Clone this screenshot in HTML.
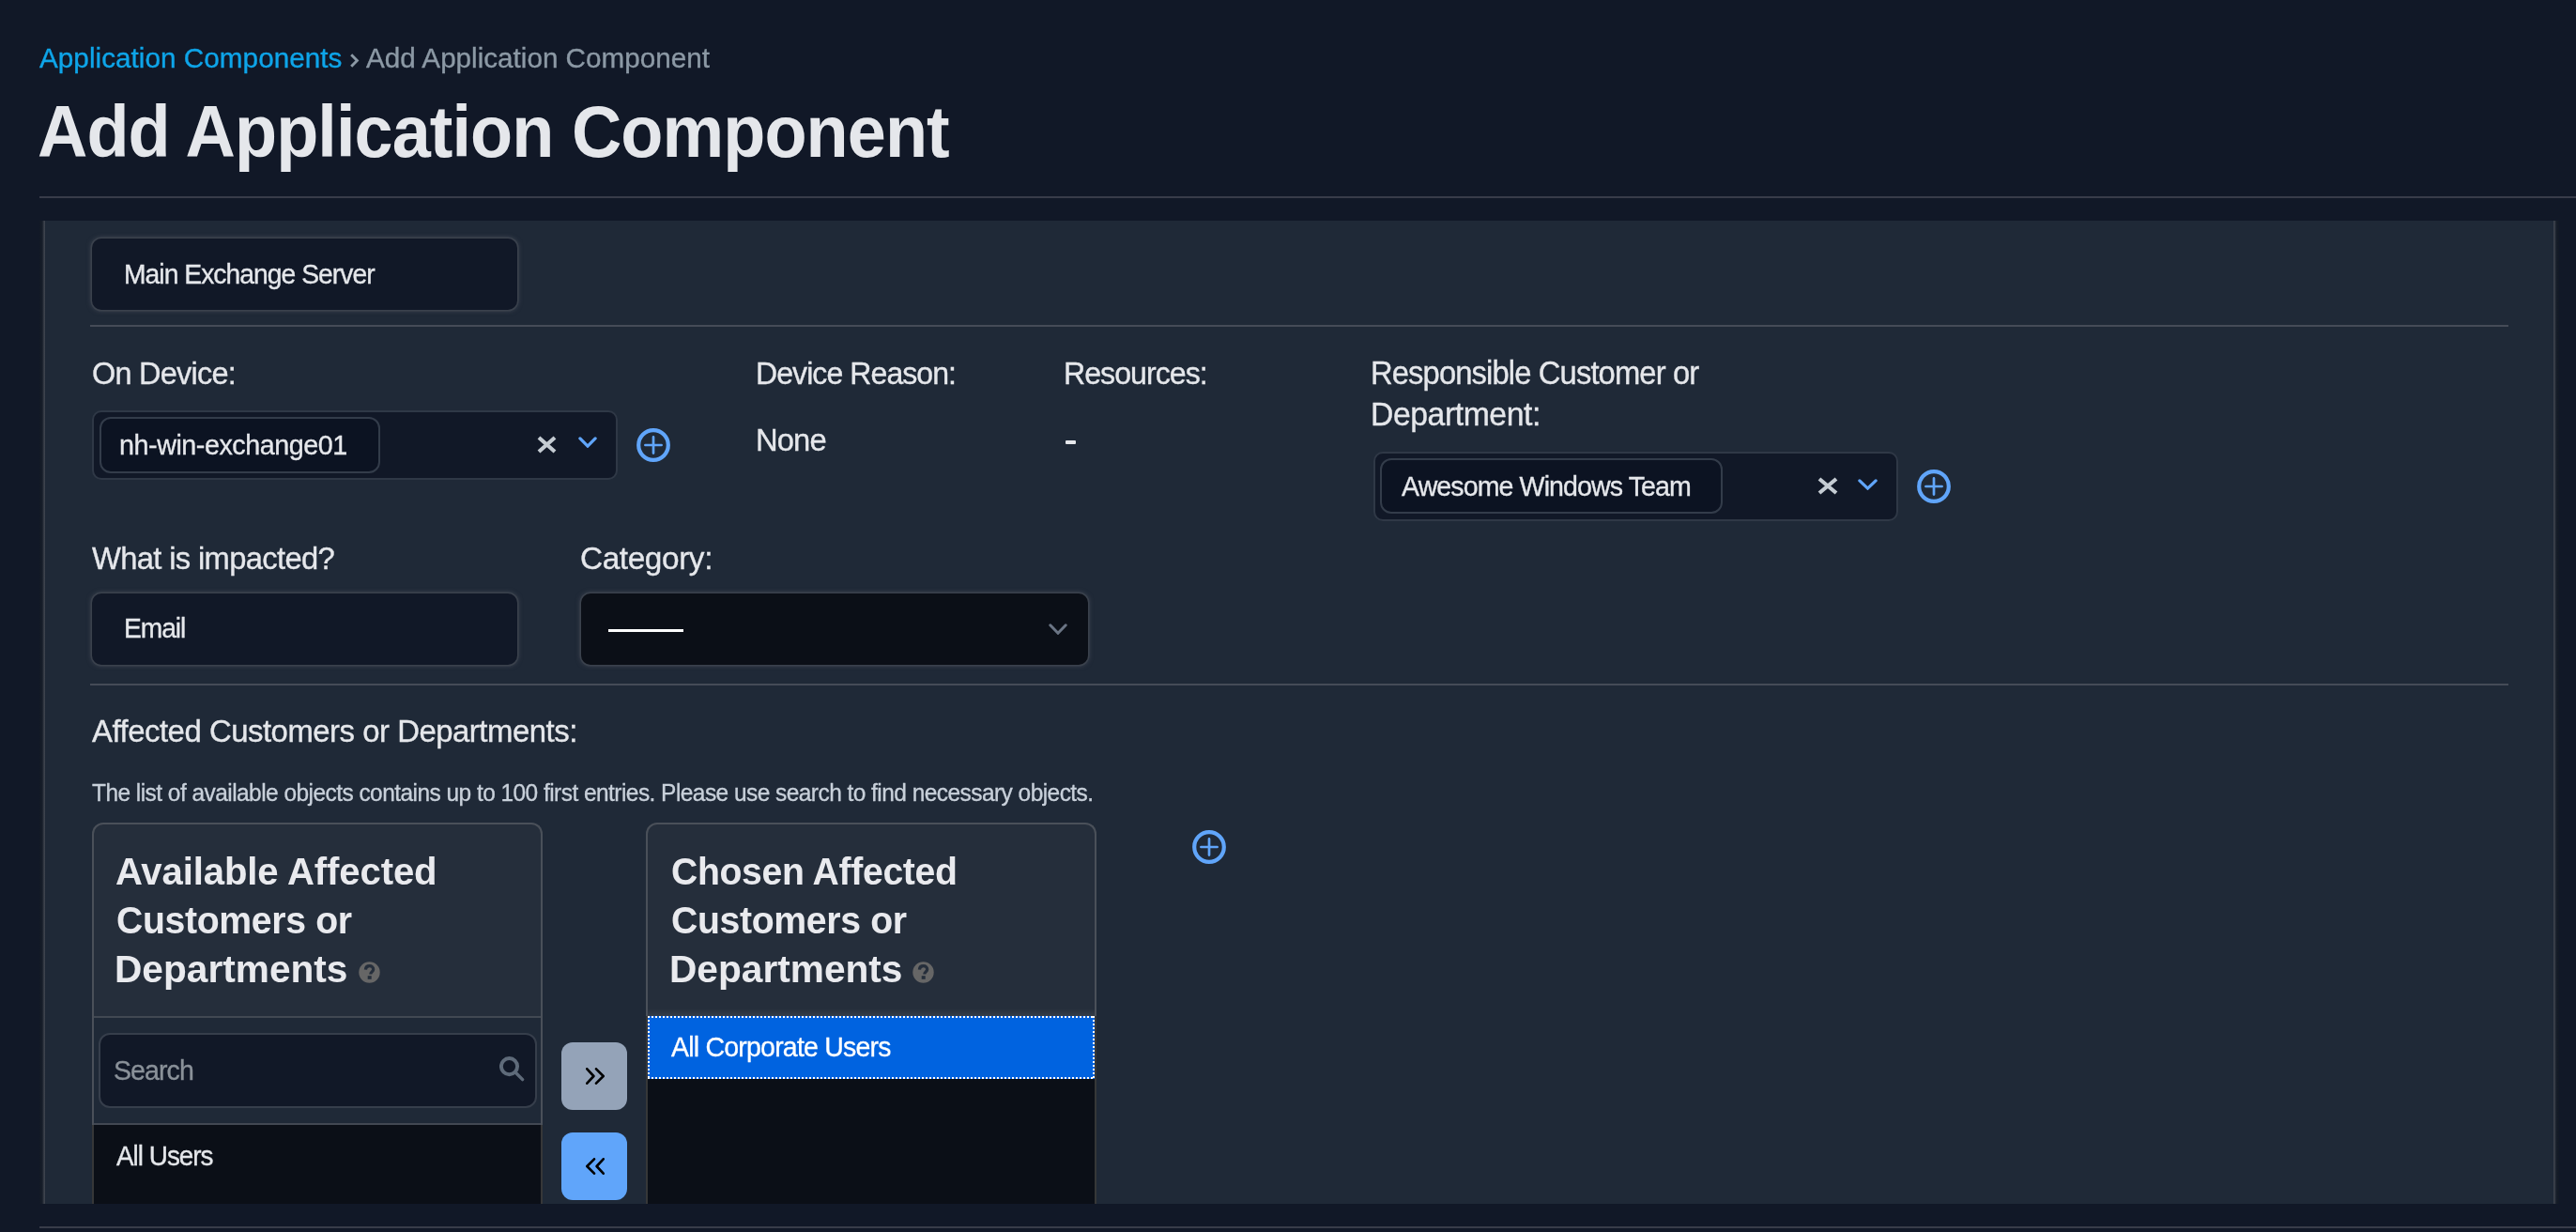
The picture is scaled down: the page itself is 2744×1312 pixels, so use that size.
<!DOCTYPE html>
<html><head><meta charset="utf-8"><title>Add Application Component</title>
<style>
html,body{margin:0;padding:0;width:2744px;height:1312px;overflow:hidden;background:#111827;font-family:"Liberation Sans",sans-serif;}
.a{position:absolute;box-sizing:border-box}
.t{position:absolute;white-space:nowrap;line-height:1;color:#e5e7eb;-webkit-font-smoothing:antialiased;-webkit-text-stroke:0.35px currentColor;transform-origin:0 0}
.b{-webkit-text-stroke:0}
</style></head><body>
<div class="t" style="left:42.0px;top:46.7px;font-size:29.7px;letter-spacing:0.03px;font-weight:400;color:#0ea5e9;transform:scaleX(1.0) translateZ(0);">Application Components</div>
<svg class="a" style="left:372px;top:56px" width="11" height="17" viewBox="0 0 11 17"><path d="M2.2 2.2 L8.4 8.5 L2.2 14.8" fill="none" stroke="#8c99a5" stroke-width="2.9"/></svg>
<div class="t" style="left:389.5px;top:46.7px;font-size:29.7px;letter-spacing:-0.01px;font-weight:400;color:#8c99a5;transform:scaleX(0.9993) translateZ(0);">Add Application Component</div>
<div class="t b" style="left:39.9px;top:102.2px;font-size:77.7px;letter-spacing:-0.97px;font-weight:700;color:#e5e7eb;transform:scaleX(0.9503) translateZ(0);">Add Application Component</div>
<div class="a" style="left:42px;top:209px;width:2702px;height:2px;background:#383c49"></div>
<div class="a" style="left:42px;top:235px;width:2684px;height:1047px;background:linear-gradient(to right,#121925 0px,#161d29 2.5px,#252b36 4px,#3b414b 4.8px,#3d434d 6px,#1f2937 6.2px,#1f2937 calc(100% - 6.2px),#3d434d calc(100% - 6px),#3b414b calc(100% - 4.8px),#252b36 calc(100% - 4px),#161d29 calc(100% - 2.5px),#121925 100%)"></div>
<div class="a" style="left:98px;top:254px;width:453px;height:76px;background:#111827;border-radius:10px;box-shadow:0 0 0 1.5px #3a414c,0 0 4px 2px rgba(62,68,80,.75)"></div>
<div class="t" style="left:131.7px;top:276.6px;font-size:30.1px;letter-spacing:-1.03px;font-weight:400;color:#e5e7eb;transform:scaleX(0.9394) translateZ(0);">Main Exchange Server</div>
<div class="a" style="left:96px;top:346px;width:2576px;height:2px;background:#454b57"></div>
<div class="t" style="left:97.9px;top:380.5px;font-size:33.9px;letter-spacing:-0.79px;font-weight:400;color:#e5e7eb;transform:scaleX(0.9587) translateZ(0);">On Device:</div>
<div class="a" style="left:98px;top:437px;width:560px;height:74px;background:#111827;border:2px solid #2f3846;border-radius:10px"></div>
<div class="a" style="left:106px;top:444px;width:299px;height:60px;background:#0c1322;border:2px solid #333c4a;border-radius:12px"></div>
<div class="t" style="left:126.9px;top:458.7px;font-size:29.6px;letter-spacing:-0.48px;font-weight:400;color:#e5e7eb;transform:scaleX(0.971) translateZ(0);">nh-win-exchange01</div>
<svg class="a" style="left:572px;top:464px" width="21" height="19" viewBox="0 0 21 19"><path d="M2 2 L19 17 M19 2 L2 17" stroke="#c5ccd3" stroke-width="4.2" stroke-linecap="butt"/></svg>
<svg class="a" style="left:616px;top:465px" width="20" height="12" viewBox="0 0 20 12"><path d="M1.9000000000000001 1.9000000000000001 L10.0 10.1 L18.099999999999998 1.9000000000000001" fill="none" stroke="#60a5fa" stroke-width="3.2" stroke-linecap="round" stroke-linejoin="miter"/></svg>
<svg class="a" style="left:678px;top:456px" width="36" height="36" viewBox="0 0 36 36"><circle cx="18.0" cy="18.0" r="15.8" fill="none" stroke="#60a5fa" stroke-width="4.2"/><path d="M18.0 9.4 V26.6 M9.4 18.0 H26.6" stroke="#60a5fa" stroke-width="2.7" stroke-linecap="round"/></svg>
<div class="t" style="left:805.1px;top:380.5px;font-size:33.9px;letter-spacing:-1.01px;font-weight:400;color:#e5e7eb;transform:scaleX(0.9466) translateZ(0);">Device Reason:</div>
<div class="t" style="left:805.1px;top:452.4px;font-size:33.9px;letter-spacing:-0.9px;font-weight:400;color:#e5e7eb;transform:scaleX(0.9662) translateZ(0);">None</div>
<div class="t" style="left:1132.6px;top:380.5px;font-size:33.9px;letter-spacing:-1.02px;font-weight:400;color:#e5e7eb;transform:scaleX(0.9476) translateZ(0);">Resources:</div>
<div class="a" style="left:1135px;top:469.4px;width:11px;height:3.6px;background:#e5e7eb;border-radius:1px"></div>
<div class="t" style="left:1460.2px;top:380.3px;font-size:34.5px;letter-spacing:-0.93px;font-weight:400;color:#e5e7eb;transform:scaleX(0.9495) translateZ(0);">Responsible Customer or</div>
<div class="t" style="left:1460.1px;top:424.0px;font-size:34.5px;letter-spacing:-0.43px;font-weight:400;color:#e5e7eb;transform:scaleX(0.9772) translateZ(0);">Department:</div>
<div class="a" style="left:1463px;top:481px;width:559px;height:74px;background:#111827;border:2px solid #2f3846;border-radius:10px"></div>
<div class="a" style="left:1470px;top:488px;width:365px;height:59px;background:#0c1322;border:2px solid #333c4a;border-radius:12px"></div>
<div class="t" style="left:1492.5px;top:502.9px;font-size:30.1px;letter-spacing:-0.96px;font-weight:400;color:#e5e7eb;transform:scaleX(0.9496) translateZ(0);">Awesome Windows Team</div>
<svg class="a" style="left:1936px;top:508px" width="22" height="19" viewBox="0 0 22 19"><path d="M2 2 L20 17 M20 2 L2 17" stroke="#c5ccd3" stroke-width="4.2" stroke-linecap="butt"/></svg>
<svg class="a" style="left:1979px;top:510px" width="21" height="12" viewBox="0 0 21 12"><path d="M1.9000000000000001 1.9000000000000001 L10.5 10.1 L19.099999999999998 1.9000000000000001" fill="none" stroke="#60a5fa" stroke-width="3.2" stroke-linecap="round" stroke-linejoin="miter"/></svg>
<svg class="a" style="left:2042px;top:500px" width="36" height="36" viewBox="0 0 36 36"><circle cx="18.0" cy="18.0" r="15.8" fill="none" stroke="#60a5fa" stroke-width="4.2"/><path d="M18.0 9.4 V26.6 M9.4 18.0 H26.6" stroke="#60a5fa" stroke-width="2.7" stroke-linecap="round"/></svg>
<div class="t" style="left:98.0px;top:576.7px;font-size:34.1px;letter-spacing:-0.7px;font-weight:400;color:#e5e7eb;transform:scaleX(0.9613) translateZ(0);">What is impacted?</div>
<div class="t" style="left:618.0px;top:576.7px;font-size:34.1px;letter-spacing:-0.4px;font-weight:400;color:#e5e7eb;transform:scaleX(0.9783) translateZ(0);">Category:</div>
<div class="a" style="left:98px;top:632px;width:453px;height:76px;background:#111827;border-radius:10px;box-shadow:0 0 0 1.5px #3a414c,0 0 4px 2px rgba(62,68,80,.75)"></div>
<div class="t" style="left:131.5px;top:654.4px;font-size:30.0px;letter-spacing:-1.12px;font-weight:400;color:#e5e7eb;transform:scaleX(0.9408) translateZ(0);">Email</div>
<div class="a" style="left:619px;top:632px;width:540px;height:76px;background:#0b0f17;border-radius:10px;box-shadow:0 0 0 1.5px #3a414c,0 0 4px 2px rgba(62,68,80,.75)"></div>
<div class="a" style="left:648px;top:670px;width:80px;height:3px;background:#fff"></div>
<svg class="a" style="left:1117px;top:664px" width="20" height="12" viewBox="0 0 20 12"><path d="M1.8 1.8 L10.0 10.2 L18.2 1.8" fill="none" stroke="#6b7585" stroke-width="3.0" stroke-linecap="round" stroke-linejoin="miter"/></svg>
<div class="a" style="left:96px;top:728px;width:2576px;height:2px;background:#454b57"></div>
<div class="t" style="left:98.0px;top:762.4px;font-size:33.9px;letter-spacing:-0.5px;font-weight:400;color:#e5e7eb;transform:scaleX(0.9707) translateZ(0);">Affected Customers or Departments:</div>
<div class="t" style="left:98.0px;top:832.2px;font-size:25.7px;letter-spacing:-0.56px;font-weight:400;color:#c8d0da;transform:scaleX(0.952) translateZ(0);">The list of available objects contains up to 100 first entries. Please use search to find necessary objects.</div>
<div class="a" style="left:98px;top:876px;width:480px;height:406px;background:#252e3b;border:2px solid #4a5059;border-bottom:none;border-radius:12px 12px 0 0"></div>
<div class="a" style="left:100px;top:1084px;width:476px;height:112px;background:#1f2937"></div>
<div class="a" style="left:100px;top:1082px;width:476px;height:2px;background:#424852"></div>
<div class="a" style="left:100px;top:1196px;width:476px;height:2px;background:#424852"></div>
<div class="a" style="left:98px;top:1198px;width:480px;height:84px;background:#0b0f17;border-left:2px solid #363738;border-right:2px solid #363738"></div>
<div class="t b" style="left:122.7px;top:907.7px;font-size:40.7px;letter-spacing:-0.13px;font-weight:700;color:#e9eaee;transform:scaleX(0.9858) translateZ(0);">Available Affected</div>
<div class="t b" style="left:123.5px;top:959.8px;font-size:40.7px;letter-spacing:-0.38px;font-weight:700;color:#e9eaee;transform:scaleX(0.9643) translateZ(0);">Customers or</div>
<div class="t b" style="left:121.5px;top:1012.0px;font-size:40.7px;letter-spacing:-0.01px;font-weight:700;color:#e9eaee;transform:scaleX(0.9994) translateZ(0);">Departments</div>
<svg class="a" style="left:381.6px;top:1023.6px" width="23" height="23" viewBox="0 0 23 23"><circle cx="11.5" cy="11.5" r="11.2" fill="#666"/><path d="M7.4 8.6 C7.6 5.8 9.4 4.6 11.6 4.6 C14 4.6 15.7 6.1 15.7 8.2 C15.7 10.6 12.8 11 12.8 13.3 V13.6" fill="none" stroke="#252e3b" stroke-width="3.2"/><rect x="9.7" y="15.2" width="4" height="3.6" fill="#252e3b"/></svg>
<div class="a" style="left:105px;top:1100px;width:467px;height:80px;background:#111827;border:2px solid #363e4b;border-radius:12px"></div>
<div class="t" style="left:121.1px;top:1125.1px;font-size:30.1px;letter-spacing:-0.99px;font-weight:400;color:#8a9199;transform:scaleX(0.9495) translateZ(0);">Search</div>
<svg class="a" style="left:532px;top:1125px" width="27" height="27" viewBox="0 0 27 27"><circle cx="10.5" cy="10.6" r="8.6" fill="none" stroke="#5f6b7a" stroke-width="3.9"/><path d="M17.5 17.5 L24.6 24.6" stroke="#5f6b7a" stroke-width="3.4" stroke-linecap="round"/></svg>
<div class="t" style="left:124.3px;top:1215.7px;font-size:29.9px;letter-spacing:-1.07px;font-weight:400;color:#e5e7eb;transform:scaleX(0.9328) translateZ(0);">All Users</div>
<div class="a" style="left:598px;top:1110px;width:70px;height:72px;background:#94a3b8;border-radius:12px"></div>
<svg class="a" style="left:624px;top:1137px" width="20" height="18" viewBox="0 0 20 18"><path d="M1.3 1.3 L8.4 9.0 L1.3 16.7 M11.0 1.3 L18.7 9.0 L11.0 16.7" fill="none" stroke="#000" stroke-width="2.6" stroke-linecap="round" stroke-linejoin="round"/></svg>
<div class="a" style="left:598px;top:1206px;width:70px;height:72px;background:#60a5fa;border-radius:12px"></div>
<svg class="a" style="left:624px;top:1233px" width="20" height="18" viewBox="0 0 20 18"><path d="M18.7 1.3 L11.6 9.0 L18.7 16.7 M9.0 1.3 L1.3 9.0 L9.0 16.7" fill="none" stroke="#000" stroke-width="2.6" stroke-linecap="round" stroke-linejoin="round"/></svg>
<div class="a" style="left:688px;top:876px;width:480px;height:406px;background:#252e3b;border:2px solid #4a5059;border-bottom:none;border-radius:12px 12px 0 0"></div>
<div class="a" style="left:688px;top:1082px;width:480px;height:200px;background:#0b0f17;border-left:2px solid #363738;border-right:2px solid #363738"></div>
<div class="a" style="left:690px;top:1074px;width:476px;height:8px;background:linear-gradient(to bottom,rgba(255,255,255,0),rgba(255,255,255,.07))"></div>
<div class="t b" style="left:714.8px;top:907.7px;font-size:40.7px;letter-spacing:-0.37px;font-weight:700;color:#e9eaee;transform:scaleX(0.963) translateZ(0);">Chosen Affected</div>
<div class="t b" style="left:715.0px;top:959.8px;font-size:40.7px;letter-spacing:-0.38px;font-weight:700;color:#e9eaee;transform:scaleX(0.9643) translateZ(0);">Customers or</div>
<div class="t b" style="left:713.0px;top:1012.0px;font-size:40.7px;letter-spacing:-0.01px;font-weight:700;color:#e9eaee;transform:scaleX(0.9994) translateZ(0);">Departments</div>
<svg class="a" style="left:971.6px;top:1023.6px" width="23" height="23" viewBox="0 0 23 23"><circle cx="11.5" cy="11.5" r="11.2" fill="#666"/><path d="M7.4 8.6 C7.6 5.8 9.4 4.6 11.6 4.6 C14 4.6 15.7 6.1 15.7 8.2 C15.7 10.6 12.8 11 12.8 13.3 V13.6" fill="none" stroke="#252e3b" stroke-width="3.2"/><rect x="9.7" y="15.2" width="4" height="3.6" fill="#252e3b"/></svg>
<div class="a" style="left:690px;top:1082px;width:476px;height:67px;background:repeating-linear-gradient(to right,#fff 0 2px,transparent 2px 4px) top/100% 2px no-repeat,repeating-linear-gradient(to right,#fff 0 2px,transparent 2px 4px) bottom/100% 2px no-repeat,repeating-linear-gradient(to bottom,#fff 0 2px,transparent 2px 4px) left/2px 100% no-repeat,repeating-linear-gradient(to bottom,#fff 0 2px,transparent 2px 4px) right/2px 100% no-repeat,#0063e0"></div>
<div class="t" style="left:714.5px;top:1099.9px;font-size:30.1px;letter-spacing:-0.82px;font-weight:400;color:#ffffff;transform:scaleX(0.9464) translateZ(0);">All Corporate Users</div>
<svg class="a" style="left:1270px;top:884px" width="36" height="36" viewBox="0 0 36 36"><circle cx="18.0" cy="18.0" r="15.8" fill="none" stroke="#60a5fa" stroke-width="4.2"/><path d="M18.0 9.4 V26.6 M9.4 18.0 H26.6" stroke="#60a5fa" stroke-width="2.7" stroke-linecap="round"/></svg>
<div class="a" style="left:42px;top:1306px;width:2702px;height:2px;background:#383c49"></div>
</body></html>
